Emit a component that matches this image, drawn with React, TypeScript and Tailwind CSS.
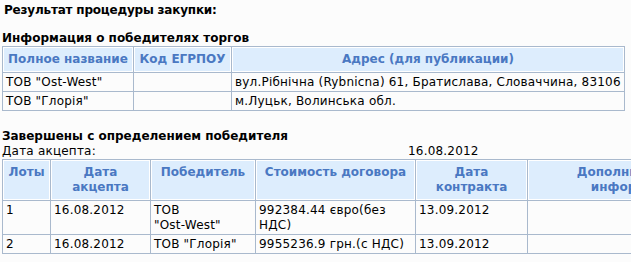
const th =
  "border border-[#a9b9cd] bg-[#ddedfd] shadow-[inset_0_0_0_1px_#ffffff] px-[4px] py-[5px] text-center align-top font-bold tracking-normal text-[#4a78c2]";
const td = "border border-[#a9b9cd] px-[3px] pt-[2px] pb-[1px] text-left align-top";

const winners = [
  {
    name: 'ТОВ "Ost-West"',
    code: "",
    address: "вул.Рібнічна (Rybnicna) 61, Братислава, Словаччина, 83106",
  },
  { name: 'ТОВ "Глорія"', code: "", address: "м.Луцьк, Волинська обл." },
];

export default function App() {
  return (
    <div className="h-[262px] w-[631px] overflow-hidden bg-[#fcfcfc] text-[12px] leading-[15px] tracking-[0.2px] text-black [font-family:'DejaVu_Sans',Verdana,sans-serif]">
      <div className="pl-[4px] pt-[3px] font-bold tracking-[-0.2px]">Результат процедуры закупки:</div>

      <div className="mt-[13px] pl-[2px] font-bold tracking-normal">Информация о победителях торгов</div>
      <table className="ml-[2px] w-[622px] table-fixed border-collapse">
        <colgroup>
          <col className="w-[131px]" />
          <col className="w-[98px]" />
          <col className="w-[393px]" />
        </colgroup>
        <thead>
          <tr>
            <th className={th}>Полное название</th>
            <th className={th}>Код ЕГРПОУ</th>
            <th className={th}>Адрес (для публикации)</th>
          </tr>
        </thead>
        <tbody>
          {winners.map((w) => (
            <tr key={w.name}>
              <td className={td}>{w.name}</td>
              <td className={td}>{w.code}</td>
              <td className={`${td} whitespace-nowrap`}>{w.address}</td>
            </tr>
          ))}
        </tbody>
      </table>

      <div className="mt-[18px] pl-[2px] font-bold tracking-normal">Завершены с определением победителя</div>
      <div className="flex pl-[2px]">
        <span className="w-[406px]">Дата акцепта:</span>
        <span>16.08.2012</span>
      </div>
      <table className="ml-[2px] w-[740px] table-fixed border-collapse">
        <colgroup>
          <col className="w-[48px]" />
          <col className="w-[100px]" />
          <col className="w-[105px]" />
          <col className="w-[160px]" />
          <col className="w-[112px]" />
          <col className="w-[215px]" />
        </colgroup>
        <thead>
          <tr>
            <th className={th}>Лоты</th>
            <th className={th}>
              Дата
              <br />
              акцепта
            </th>
            <th className={th}>Победитель</th>
            <th className={th}>Стоимость договора</th>
            <th className={th}>
              Дата
              <br />
              контракта
            </th>
            <th className={th}>
              Дополнительная
              <br />
              информация
            </th>
          </tr>
        </thead>
        <tbody>
          <tr>
            <td className={td}>1</td>
            <td className={td}>16.08.2012</td>
            <td className={td}>
              ТОВ
              <br />
              "Ost-West"
            </td>
            <td className={td}>
              992384.44 євро(без
              <br />
              НДС)
            </td>
            <td className={td}>13.09.2012</td>
            <td className={td}></td>
          </tr>
          <tr>
            <td className={td}>2</td>
            <td className={td}>16.08.2012</td>
            <td className={`${td} whitespace-nowrap`}>ТОВ "Глорія"</td>
            <td className={`${td} whitespace-nowrap`}>9955236.9 грн.(с НДС)</td>
            <td className={td}>13.09.2012</td>
            <td className={td}></td>
          </tr>
        </tbody>
      </table>
    </div>
  );
}
